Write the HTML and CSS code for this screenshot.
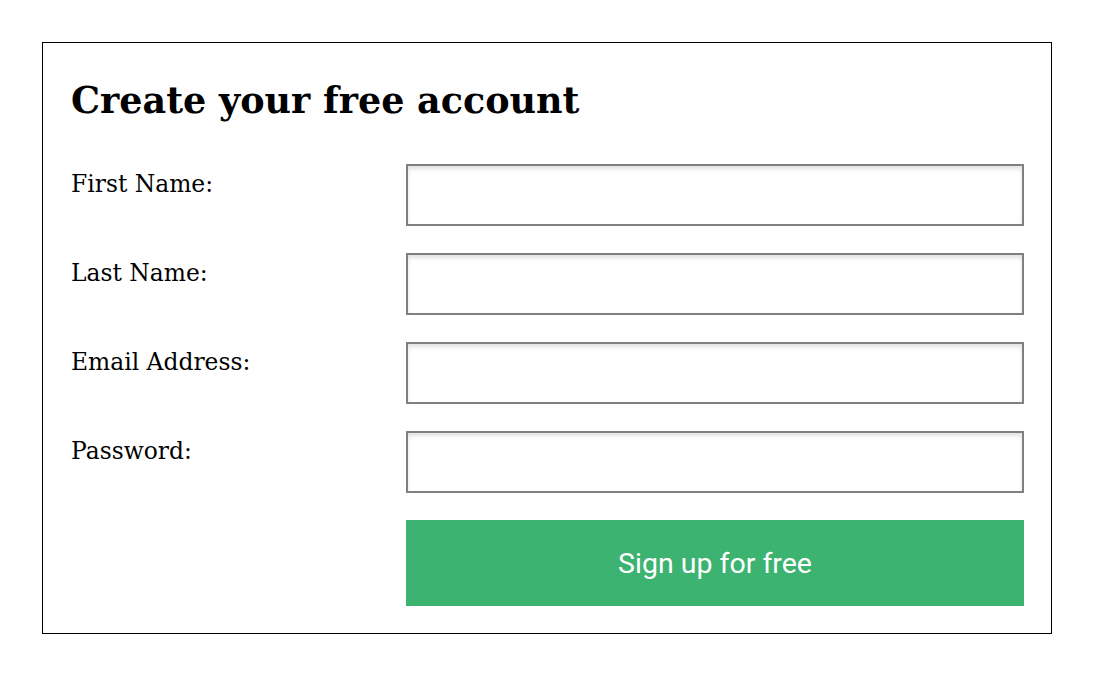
FILE: index.html
```html
<!DOCTYPE html>
<html>
<head>
<meta charset="utf-8">
<link rel="stylesheet" href="styles.css">
</head>
<body>
<div class="card">
  <h1 class="title">Create your free account</h1>
  <form class="form">
    <label class="label" for="fn">First Name:</label>
    <input class="field" id="fn" type="text">
    <label class="label" for="ln">Last Name:</label>
    <input class="field" id="ln" type="text">
    <label class="label" for="em">Email Address:</label>
    <input class="field" id="em" type="email">
    <label class="label" for="pw">Password:</label>
    <input class="field" id="pw" type="password">
    <span></span>
    <button class="submit" type="button">Sign up for free</button>
  </form>
</div>
</body>
</html>
```
FILE: styles.css
```css
html, body {
  margin: 0;
  padding: 0;
  background: #fff;
}
.card {
  margin: 42px 0 0 42px;
  width: 1010px;
  box-sizing: border-box;
  border: 1.5px solid #000;
  padding: 28px 28px 27px 28px;
}
.title {
  margin: 0 0 33px 0;
  font-family: "DejaVu Serif", Georgia, serif;
  font-weight: bold;
  font-size: 36.5px;
  line-height: 60px;
  color: #000;
}
.form {
  display: grid;
  grid-template-columns: 335px 618px;
  row-gap: 27px;
}
.label {
  font-family: "DejaVu Serif", Georgia, serif;
  font-size: 23.4px;
  color: #000;
  padding-top: 6px;
}
.field {
  box-sizing: border-box;
  height: 62px;
  margin: 0;
  border: 2px solid #808080;
  background: #fff;
  box-shadow: inset 0 3px 4px rgba(0,0,0,0.12);
  padding: 0 10px;
  font-size: 20px;
}
.submit {
  height: 86px;
  margin: 0;
  border: none;
  background: #3cb371;
  color: #fff;
  font-family: Roboto, "Liberation Sans", sans-serif;
  font-size: 28.5px;
}
```
